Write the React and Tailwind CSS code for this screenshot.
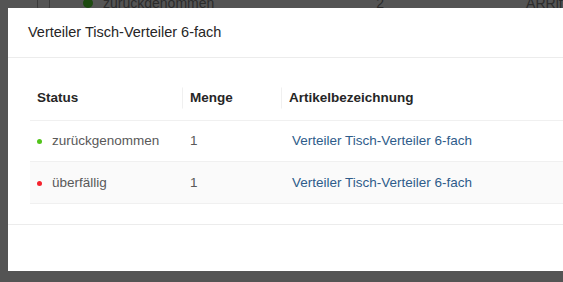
import React from 'react';

const rows = [
  { status: 'zurückgenommen', dot: 'bg-[#52c41a]', qty: 1, name: 'Verteiler Tisch-Verteiler 6-fach', striped: false },
  { status: 'überfällig', dot: 'bg-[#f5222d]', qty: 1, name: 'Verteiler Tisch-Verteiler 6-fach', striped: true },
];

export default function App() {
  return (
    <div
      className="relative h-[282px] w-[563px] overflow-hidden bg-[#545454]"
      style={{ fontFamily: '"Liberation Sans", Arial, sans-serif' }}
    >
      {/* Liste im Hintergrund, unter der Maske */}
      <div className="-mt-[7px] flex h-[20px] items-center text-[14px] text-[#2b2b2b]">
        <div className="ml-[37px] h-[13px] w-[13px] shrink-0 rounded-[3px] border border-[#3a3a3a]"></div>
        <div className="ml-[33px] h-[10px] w-[10px] shrink-0 rounded-full bg-[#1d4a10]"></div>
        <span className="ml-[10px] shrink-0">zurückgenommen</span>
        <span className="ml-[162px] shrink-0">2</span>
        <span className="ml-[142px] shrink-0">ARRifl</span>
      </div>

      {/* Modal */}
      <div className="absolute left-[8px] top-[8px] w-[640px] bg-white">
        <div className="flex h-[50px] items-center border-b border-[#ececec] px-[20px] text-[14.5px] text-[#262626]">
          Verteiler Tisch-Verteiler 6-fach
        </div>

        <div className="pl-[22px] pr-[22px] pt-[19px] pb-[20px]">
          <table className="w-full border-collapse text-left text-[13.5px]">
            <thead>
              <tr className="h-[43px] border-b border-[#f0f0f0] text-[#262626]">
                <th className="w-[152px] px-[7px] font-bold">Status</th>
                <th className="relative w-[99px] px-[8px] font-bold">
                  <span className="absolute left-0 top-1/2 h-[21px] w-px -translate-y-1/2 bg-[#f0f0f0]"></span>
                  Menge
                </th>
                <th className="relative px-[8px] font-bold">
                  <span className="absolute left-0 top-1/2 h-[21px] w-px -translate-y-1/2 bg-[#f0f0f0]"></span>
                  Artikelbezeichnung
                </th>
              </tr>
            </thead>
            <tbody>
              {rows.map((r, i) => (
                <tr
                  key={i}
                  className={`border-b border-[#f0f0f0] ${r.striped ? 'h-[42px] bg-[#fafafa]' : 'h-[41px] bg-white'}`}
                >
                  <td className="px-[7px] pt-[2px]">
                    <span className="flex items-center text-[#595959]">
                      <span className={`h-[5px] w-[5px] rounded-full ${r.dot}`}></span>
                      <span className="ml-[10px]">{r.status}</span>
                    </span>
                  </td>
                  <td className="px-[8px] pt-[2px]">
                    <span className="text-[#595959]">{r.qty}</span>
                  </td>
                  <td className="px-[8px] pt-[2px]">
                    <span className="pl-[3px] text-[#2e5c8a]">{r.name}</span>
                  </td>
                </tr>
              ))}
            </tbody>
          </table>
        </div>

        <div className="h-[47px] border-t border-[#ececec]"></div>
      </div>
    </div>
  );
}
